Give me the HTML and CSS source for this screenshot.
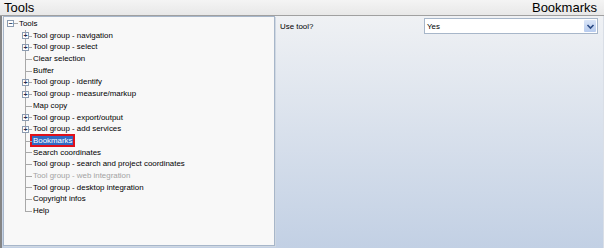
FILE: index.html
```html
<!DOCTYPE html>
<html lang="en">
<head>
    <meta charset="UTF-8">
    <title>Tools - Bookmarks</title>
    <link rel="stylesheet" href="styles.css">
</head>
<body>
    <div class="app">
        <div class="titlebar">
            <span>Tools</span>
            <span>Bookmarks</span>
        </div>

        <div class="main">
            <div class="tree-panel">
                <div class="root-row">
                    <span class="toggle">&minus;</span>
                    <span class="root-line"></span>
                    <span>Tools</span>
                </div>
                <ul class="children">
                    <li class="node"><span class="toggle">+</span>Tool group - navigation</li>
                    <li class="node"><span class="toggle">+</span>Tool group - select</li>
                    <li class="node">Clear selection</li>
                    <li class="node">Buffer</li>
                    <li class="node"><span class="toggle">+</span>Tool group - identify</li>
                    <li class="node"><span class="toggle">+</span>Tool group - measure/markup</li>
                    <li class="node">Map copy</li>
                    <li class="node"><span class="toggle">+</span>Tool group - export/output</li>
                    <li class="node"><span class="toggle">+</span>Tool group - add services</li>
                    <li class="node"><span class="selected">Bookmarks</span></li>
                    <li class="node">Search coordinates</li>
                    <li class="node">Tool group - search and project coordinates</li>
                    <li class="node disabled">Tool group - web integration</li>
                    <li class="node">Tool group - desktop integration</li>
                    <li class="node">Copyright infos</li>
                    <li class="node">Help</li>
                </ul>
            </div>

            <div class="settings">
                <div class="setting-row">
                    <label>Use tool?</label>
                    <div class="combo">
                        <span class="combo-value">Yes</span>
                        <span class="combo-btn">
                            <svg width="9" height="9" viewBox="0 0 9 9">
                                <path d="M1.5 3 L4.5 6 L7.5 3" fill="none" stroke="#2b4a84" stroke-width="1.6"/>
                            </svg>
                        </span>
                    </div>
                </div>
            </div>
        </div>
    </div>
</body>
</html>
```
FILE: styles.css
```css
body, html {
    margin: 0;
    padding: 0;
    font-family: "Liberation Sans", Arial, sans-serif;
    background-color: #f0f0f0;
}

.app {
    width: 604px;
    height: 248px;
    display: flex;
    flex-direction: column;
    overflow: hidden;
}

.titlebar {
    height: 15px;
    line-height: 15px;
    display: flex;
    justify-content: space-between;
    padding: 0 7px 0 4px;
    font-size: 13px;
    color: #000;
    background: linear-gradient(#f4f4f4, #e8e8e8);
    border-bottom: 1px solid #a0a0a0;
}

.main {
    flex: 1;
    display: flex;
    background: linear-gradient(#eff1f4, #c2d0e4);
    border-left: 2px solid #858585;
    border-right: 1px solid #d9dee6;
}

.tree-panel {
    width: 270px;
    margin: 0 0 2px 1px;
    background-color: #f8f8f8;
    border: 1px solid #a7b6c9;
    box-shadow: 1px 1px 0 #cfd8e3;
    font-size: 7.9px;
    color: #000;
}

.root-row {
    height: 11.7px;
    line-height: 11.7px;
    display: flex;
    align-items: center;
    padding-left: 3px;
    margin-top: 1px;
}

.toggle {
    width: 5px;
    height: 5px;
    border: 1px solid #8b9bb0;
    background: #fff;
    color: #1f2f4f;
    font-size: 7px;
    line-height: 5px;
    text-align: center;
    font-weight: bold;
    box-sizing: content-box;
    display: inline-block;
}

.root-line {
    width: 4px;
    border-top: 1px solid #a8a8a8;
    margin-right: 1px;
}

.children {
    list-style: none;
    margin: 0 0 0 21px;
    padding: 0;
}

.node {
    position: relative;
    height: 11.7px;
    line-height: 11.7px;
    padding-left: 8px;
    white-space: nowrap;
}

.node::before {
    content: '';
    position: absolute;
    left: 0;
    top: 0;
    bottom: 0;
    border-left: 1px solid #a8a8a8;
}

.node:last-child::before {
    bottom: 50%;
}

.node::after {
    content: '';
    position: absolute;
    left: 0;
    top: 50%;
    width: 7px;
    border-top: 1px solid #a8a8a8;
}

.node .toggle {
    position: absolute;
    left: -3px;
    top: 2.5px;
    z-index: 1;
}

.node.disabled {
    color: #a3a3a3;
}

.selected {
    background-color: #316ac5;
    color: #fff;
    padding: 0 1px;
    margin-left: -1px;
    outline: 2px solid #e0101a;
}

.settings {
    flex: 1;
    padding: 1px 5px 0 5px;
}

.setting-row {
    display: flex;
    justify-content: space-between;
    align-items: flex-start;
    font-size: 7.9px;
}

.setting-row label {
    padding-top: 5px;
}

.combo {
    width: 172px;
    height: 14px;
    margin-top: 1px;
    display: flex;
    align-items: center;
    justify-content: space-between;
    background: #fff;
    border: 1px solid #a7b6c9;
}

.combo-value {
    padding-left: 2px;
}

.combo-btn {
    width: 12px;
    height: 12px;
    margin-right: 1px;
    display: flex;
    align-items: center;
    justify-content: center;
    background: linear-gradient(#dbe6f8, #b7cbee);
    border-radius: 1px;
}
```
